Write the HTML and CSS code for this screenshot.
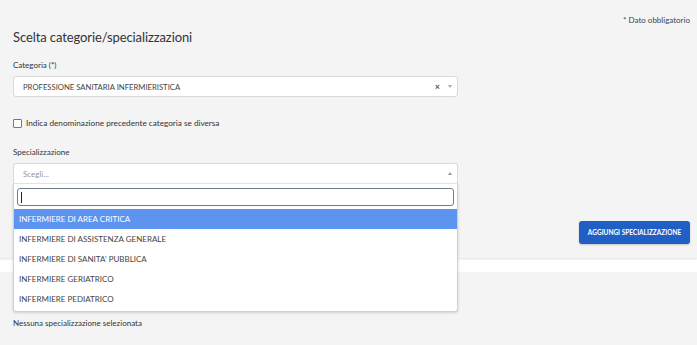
FILE: index.html
```html
<!DOCTYPE html>
<html lang="it">

<head>
  <meta charset="UTF-8">
  <meta name="viewport" content="width=device-width, initial-scale=1.0">
  <title>Scelta categorie/specializzazioni</title>
  <link rel="stylesheet" href="styles.css">
</head>

<body>
  <div class="card card-top">
    <p class="required-note">* Dato obbligatorio</p>
    <h2 class="card-title">Scelta categorie/specializzazioni</h2>

    <div class="form-group">
      <label class="field-label">Categoria (*)</label>
      <div class="select-box">
        <span class="select-value">PROFESSIONE SANITARIA INFERMIERISTICA</span>
        <span class="select-clear">&times;</span>
        <span class="select-arrow down"></span>
      </div>
    </div>

    <label class="check-row">
      <span class="check-box"></span>
      Indica denominazione precedente categoria se diversa
    </label>

    <div class="form-group spaced">
      <label class="field-label">Specializzazione</label>
      <div class="select-wrap">
        <div class="select-box open">
          <span class="select-placeholder">Scegli...</span>
          <span class="select-arrow up"></span>
        </div>
        <div class="dropdown">
          <div class="dropdown-search"><span class="caret"></span></div>
          <ul class="dropdown-list">
            <li class="active">INFERMIERE DI AREA CRITICA</li>
            <li>INFERMIERE DI ASSISTENZA GENERALE</li>
            <li>INFERMIERE DI SANITA' PUBBLICA</li>
            <li>INFERMIERE GERIATRICO</li>
            <li>INFERMIERE PEDIATRICO</li>
          </ul>
        </div>
      </div>
    </div>

    <div class="actions">
      <button type="button" class="btn-primary">AGGIUNGI SPECIALIZZAZIONE</button>
    </div>
  </div>

  <div class="card card-bottom">
    <p class="empty-text">Nessuna specializzazione selezionata</p>
  </div>
</body>

</html>
```

FILE: styles.css
```css
body {
  margin: 0;
  background-color: #fff;
  font-family: 'Lato', 'Open Sans', sans-serif;
  color: #333;
}

.card {
  background-color: #f4f4f4;
  padding: 0 7px 0 13px;
  box-shadow: 0 1px 2px rgba(0, 0, 0, 0.12);
}

.card-top {
  height: 258px;
  box-sizing: border-box;
  padding-top: 15px;
}

.card-bottom {
  margin-top: 14px;
  height: 80px;
  padding-top: 46px;
  box-sizing: border-box;
}

.required-note {
  margin: 0;
  text-align: right;
  font-size: 8px;
  line-height: 10px;
  color: #444;
}

.card-title {
  margin: 4px 0 0;
  font-size: 13px;
  font-weight: 400;
  line-height: 16px;
  color: #333;
  letter-spacing: -0.1px;
}

.form-group {
  width: 445px;
}

.form-group.spaced {
  padding-top: 4px;
}

.field-label {
  display: block;
  font-size: 8px;
  line-height: 10px;
  color: #333;
  margin: 15px 0 6px;
}

.select-box {
  position: relative;
  height: 21px;
  box-sizing: border-box;
  background-color: #fff;
  border: 1px solid #d9d9d9;
  border-radius: 3px;
  display: flex;
  align-items: center;
  padding-left: 9px;
  font-size: 7.7px;
}

.select-value {
  color: #444;
  flex: 1;
}

.select-placeholder {
  color: #999;
  flex: 1;
  font-size: 8px;
}

.select-clear {
  color: #555;
  font-size: 9px;
  font-weight: 700;
  margin-right: 8px;
}

.select-arrow {
  width: 0;
  height: 0;
  margin-right: 5px;
  border-left: 2px solid transparent;
  border-right: 2px solid transparent;
}

.select-arrow.down {
  border-top: 3px solid #aaa;
}

.select-arrow.up {
  border-bottom: 3px solid #999;
}

.check-row {
  display: flex;
  align-items: center;
  margin-top: 21px;
  font-size: 8.2px;
  color: #333;
}

.check-box {
  width: 7px;
  height: 7px;
  border: 1px solid #777;
  border-radius: 1px;
  background: #fff;
  margin-right: 4px;
}

.select-wrap {
  position: relative;
}

.select-box.open {
  border-bottom-color: #eee6d6;
  border-radius: 3px 3px 0 0;
}

.dropdown {
  position: absolute;
  top: 100%;
  left: 0;
  right: 0;
  background-color: #fff;
  border: 1px solid #d0d0d0;
  border-top: none;
  border-radius: 0 0 3px 3px;
  box-shadow: 0 1px 3px rgba(0, 0, 0, 0.15);
  z-index: 2;
}

.dropdown-search {
  margin: 4px 3px 3px;
  height: 18px;
  box-sizing: border-box;
  border: 1px solid #6e7c8c;
  border-radius: 3px;
  display: flex;
  align-items: center;
  padding-left: 3px;
}

.caret {
  width: 1px;
  height: 11px;
  background: #222;
}

.dropdown-list {
  list-style: none;
  margin: 0 0 2px;
  padding: 0;
}

.dropdown-list li {
  height: 20px;
  line-height: 20px;
  padding-left: 5px;
  font-size: 8px;
  color: #444;
}

.dropdown-list li.active {
  background-color: #5d94ef;
  color: #fff;
}

.actions {
  display: flex;
  justify-content: flex-end;
  margin-top: 37px;
}

.btn-primary {
  height: 23px;
  width: 111px;
  padding: 0;
  background-color: #1f5fc6;
  color: #fff;
  border: none;
  border-radius: 3px;
  font-family: inherit;
  font-size: 6.5px;
  font-weight: 700;
  box-shadow: 0 1px 2px rgba(0, 0, 0, 0.2);
}

.empty-text {
  margin: 0;
  font-size: 8px;
  color: #333;
}
```
